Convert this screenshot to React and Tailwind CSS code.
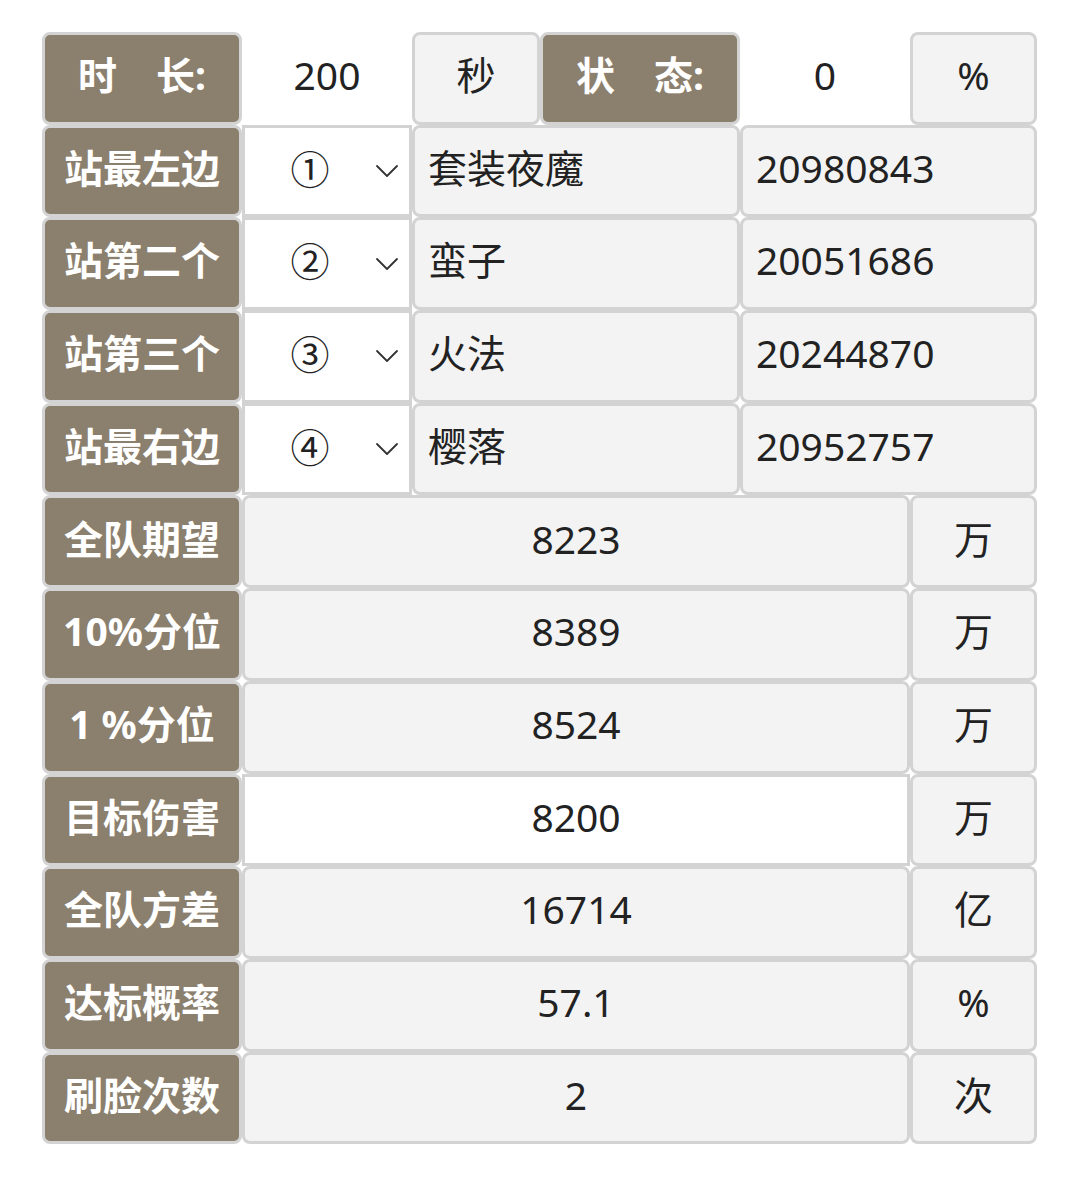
const font = { fontFamily: '"Noto Sans", "Noto Sans CJK SC", sans-serif' };

function Label({ children, className = '' }) {
  return (
    <div className={`flex items-center justify-center rounded-lg border-[3px] border-[#d3d3d3] bg-[#8b7f6e] pb-[6px] text-[39px] font-bold text-white whitespace-pre ${className}`}>
      {children}
    </div>
  );
}

function Cell({ children, className = '', align = 'center' }) {
  return (
    <div className={`flex items-center rounded-lg border-[3px] border-[#d3d3d3] bg-[#f3f3f3] pb-[6px] text-[39px] text-[#222] ${align === 'left' ? 'justify-start pl-[13px]' : 'justify-center'} ${className}`}>
      {children}
    </div>
  );
}

function Input({ children, className = '' }) {
  return (
    <div className={`flex items-center justify-center bg-white pb-[6px] text-[39px] text-[#222] ${className}`}>
      {children}
    </div>
  );
}

function Chevron() {
  return (
    <svg width="24" height="14" viewBox="0 0 24 14" fill="none" stroke="#333" strokeWidth="1.8" strokeLinecap="round" strokeLinejoin="round">
      <path d="M2 2l10 10L22 2" />
    </svg>
  );
}

function Select({ value }) {
  return (
    <div className="flex items-center border-[3px] border-[#d3d3d3] bg-white pb-[4px] text-[39px] text-[#222]">
      <span className="flex-1 text-center">{value}</span>
      <span className="mr-[10px] flex items-center pt-[4px]"><Chevron /></span>
    </div>
  );
}

const players = [
  ['站最左边', '①', '套装夜魔', '20980843'],
  ['站第二个', '②', '蛮子', '20051686'],
  ['站第三个', '③', '火法', '20244870'],
  ['站最右边', '④', '樱落', '20952757'],
];

const stats = [
  ['全队期望', '8223', '万', false],
  ['10%分位', '8389', '万', false],
  ['1 %分位', '8524', '万', false],
  ['目标伤害', '8200', '万', true],
  ['全队方差', '16714', '亿', false],
  ['达标概率', '57.1', '%', false],
  ['刷脸次数', '2', '次', false],
];

export default function App() {
  return (
    <div className="min-h-[1202px] w-[1080px] bg-white pt-[32px] pl-[42px]" style={font}>
      <div className="grid w-[995px] grid-cols-[200px_170px_128px_200px_170px_127px] auto-rows-[92.7px]">
        <Label>{'时\u3000长:'}</Label>
        <Input className="border-[3px] border-white">200</Input>
        <Cell>秒</Cell>
        <Label>{'状\u3000态:'}</Label>
        <Input className="border-[3px] border-white">0</Input>
        <Cell>%</Cell>

        {players.map(([label, num, name, id]) => (
          <div key={label} className="contents">
            <Label>{label}</Label>
            <Select value={num} />
            <Cell align="left" className="col-span-2">{name}</Cell>
            <Cell align="left" className="col-span-2">{id}</Cell>
          </div>
        ))}

        {stats.map(([label, value, unit, editable]) => (
          <div key={label} className="contents">
            <Label>{label}</Label>
            {editable ? (
              <Input className="col-span-4 border-[3px] border-[#d3d3d3]">{value}</Input>
            ) : (
              <Cell className="col-span-4">{value}</Cell>
            )}
            <Cell>{unit}</Cell>
          </div>
        ))}
      </div>
    </div>
  );
}
